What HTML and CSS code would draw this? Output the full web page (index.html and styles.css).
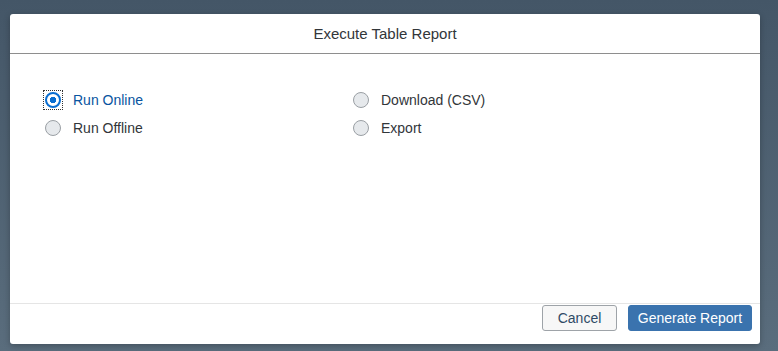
FILE: index.html
```html
<!DOCTYPE html>
<html lang="en">
<head>
    <meta charset="UTF-8">
    <title>Execute Table Report</title>
    <link rel="stylesheet" href="styles.css">
</head>
<body>

    <!-- Dialog -->
    <div class="dialog">
        <div class="dialog-header">Execute Table Report</div>

        <div class="dialog-content">
            <div class="radio-col">
                <label class="radio-item selected">
                    <span class="radio-focus"><span class="radio"></span></span>
                    <span class="radio-text">Run Online</span>
                </label>
                <label class="radio-item">
                    <span class="radio-focus"><span class="radio"></span></span>
                    <span class="radio-text">Run Offline</span>
                </label>
            </div>
            <div class="radio-col">
                <label class="radio-item">
                    <span class="radio-focus"><span class="radio"></span></span>
                    <span class="radio-text">Download (CSV)</span>
                </label>
                <label class="radio-item">
                    <span class="radio-focus"><span class="radio"></span></span>
                    <span class="radio-text">Export</span>
                </label>
            </div>
        </div>

        <div class="dialog-footer">
            <button type="button" class="btn btn-default">Cancel</button>
            <button type="button" class="btn btn-emph">Generate Report</button>
        </div>
    </div>

</body>
</html>
```

FILE: styles.css
```css
body {
    margin: 0;
    padding: 14px 0 0 10px;
    height: 351px;
    box-sizing: border-box;
    font-family: 'Liberation Sans', Arial, sans-serif;
    background: linear-gradient(to bottom, #445667, #5a6d7d);
    overflow: hidden;
}

/* Dialog */
.dialog {
    width: 750px;
    height: 330px;
    background-color: #ffffff;
    border-radius: 3px;
    box-shadow: 0 2px 6px rgba(0, 0, 0, 0.25);
    display: flex;
    flex-direction: column;
}

.dialog-header {
    height: 39px;
    border-bottom: 1px solid #8e8e8e;
    display: flex;
    align-items: center;
    justify-content: center;
    font-size: 15px;
    color: #32363a;
}

.dialog-content {
    flex: 1;
    display: flex;
    padding: 32px 0 0 33px;
}

.radio-col {
    width: 308px;
    display: flex;
    flex-direction: column;
}

.radio-item {
    display: flex;
    align-items: center;
    height: 28px;
    font-size: 14px;
    color: #32363a;
}

.radio-focus {
    width: 18px;
    height: 18px;
    margin-right: 10px;
    display: flex;
    align-items: center;
    justify-content: center;
    border: 1px dotted transparent;
}

.radio {
    width: 14px;
    height: 14px;
    border-radius: 50%;
    border: 1px solid #9a9fa4;
    background-color: #e6e9ec;
    box-sizing: content-box;
}

.radio-item.selected .radio-focus {
    border-color: #333;
}

.radio-item.selected .radio {
    width: 12px;
    height: 12px;
    border: 2px solid #0a6ed1;
    background: radial-gradient(circle, #0a6ed1 0 3px, #ffffff 3.5px);
}

.radio-item.selected .radio-text {
    color: #0854a0;
}

/* Footer */
.dialog-footer {
    height: 39px;
    border-top: 1px solid #e5e5e5;
    display: flex;
    align-items: flex-start;
    justify-content: flex-end;
    padding: 1px 8px 0 0;
    gap: 11px;
}

.btn {
    height: 26px;
    font-family: inherit;
    font-size: 14px;
    border-radius: 3px;
    padding: 0 4px;
    white-space: nowrap;
    cursor: pointer;
}

.btn-default {
    width: 75px;
    background-color: #f7f7f7;
    border: 1px solid #9ea3a8;
    color: #2f4a66;
}

.btn-emph {
    width: 124px;
    background-color: #3a73ae;
    border: 1px solid #3a73ae;
    color: #ffffff;
}
```
